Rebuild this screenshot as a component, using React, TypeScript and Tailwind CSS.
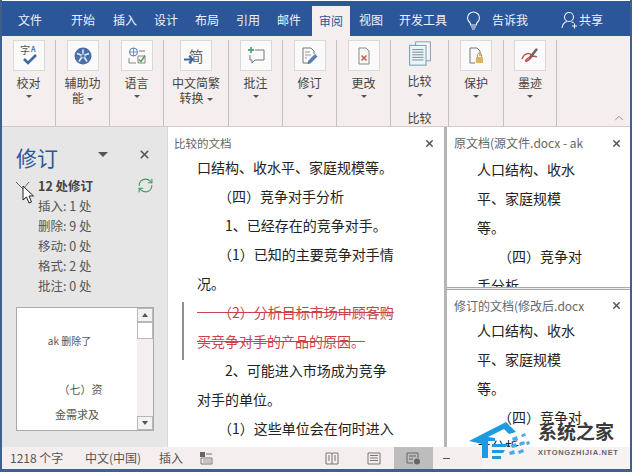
import { ChevronUp, RefreshCw, X } from "lucide-react";

const cjk = { fontFamily: '"Noto Sans CJK SC", "Noto Sans", sans-serif' };

const tabs = [
  { label: "文件", ml: "ml-[16px]" },
  { label: "开始", ml: "ml-[29px]" },
  { label: "插入", ml: "ml-[18px]" },
  { label: "设计", ml: "ml-[17px]" },
  { label: "布局", ml: "ml-[17px]" },
  { label: "引用", ml: "ml-[17px]" },
  { label: "邮件", ml: "ml-[17px]" },
];

function Caret({ className = "" }: { className?: string }) {
  return <span className={`inline-block h-0 w-0 border-x-[3px] border-t-[3px] border-x-transparent border-t-[#555] ${className}`} />;
}

function IconBox({ children }: { children: React.ReactNode }) {
  return <div className="flex h-[31px] w-[32px] items-center justify-center border border-[#dcd8d8] bg-[#fbfafa]">{children}</div>;
}

function RibbonGroup({ w, icon, lines, inlineCaret }: { w: string; icon: React.ReactNode; lines: string[]; inlineCaret?: boolean }) {
  return (
    <div className={`flex h-[86px] flex-col items-center border-r border-[#c6c2c2] ${w}`}>
      <IconBox>{icon}</IconBox>
      <div className="mt-[4px] text-center text-[12px] leading-[15px] text-[#444]">
        {lines.map((line, i) => (
          <div key={line}>
            {line}
            {inlineCaret && i === lines.length - 1 && <Caret className="mb-[2px] ml-[3px]" />}
          </div>
        ))}
      </div>
      {!inlineCaret && <Caret className="mt-[5px]" />}
    </div>
  );
}

type Line = { text: string; indent?: boolean; paren?: boolean; del?: boolean };

function DocLines({ lines, className = "" }: { lines: Line[]; className?: string }) {
  return (
    <div className={className}>
      {lines.map((l) => (
        <p
          key={l.text}
          className={`h-[29px] whitespace-pre text-[14px] leading-[29px] ${l.del ? "text-[#c8434a] line-through" : "text-[#222]"} ${l.indent ? "pl-[28px]" : ""} ${l.paren ? "pl-[21px]" : ""}`}
        >
          {l.text}
        </p>
      ))}
    </div>
  );
}

function PaneTitle({ title, top }: { title: string; top: string }) {
  return (
    <div className={`flex h-[26px] shrink-0 items-center justify-between pl-[7px] pr-[8px] ${top}`}>
      <span className="w-[131px] overflow-hidden whitespace-nowrap text-[12px] leading-[20px] text-[#666]">{title}</span>
      <X size={11} strokeWidth={3.2} className="text-[#555]" />
    </div>
  );
}

const mainDoc: Line[] = [
  { text: "口结构、收水平、家庭规模等。" },
  { text: "（四）竞争对手分析", paren: true },
  { text: "1、已经存在的竞争对手。", indent: true },
  { text: "（1）已知的主要竞争对手情", paren: true },
  { text: "况。" },
  { text: "\u2002\u2002\u2002（2）分析目标市场中顾客购", del: true },
  { text: "买竞争对手的产品的原因。", del: true },
  { text: "2、可能进入市场成为竞争", indent: true },
  { text: "对手的单位。" },
  { text: "（1）这些单位会在何时进入", paren: true },
];

const sideDoc: Line[] = [
  { text: "人口结构、收水" },
  { text: "平、家庭规模" },
  { text: "等。" },
  { text: "（四）竞争对", paren: true },
  { text: "手分析" },
];

const stats = ["插入: 1 处", "删除: 9 处", "移动: 0 处", "格式: 2 处", "批注: 0 处"];

export default function App() {
  return (
    <div className="relative flex h-[472px] w-[632px] flex-col overflow-hidden border-x-[2px] border-b-[3px] border-x-[#3f5f8c] border-b-[#3f5f8c] bg-white pt-px" style={cjk}>
      {/* tabs */}
      <div className="flex h-[35px] shrink-0 items-center bg-[#2b579a] pt-[3px] text-[12px] text-[#eef2f8]">
        {tabs.map((t) => (
          <div key={t.label} className={`w-[24px] whitespace-nowrap ${t.ml}`}>
            {t.label}
          </div>
        ))}
        <div className="ml-[11px] flex h-[30px] w-[38px] items-center justify-center self-end bg-[#f4eeee] text-[#2b579a]">审阅</div>
        <div className="ml-[9px] w-[24px]">视图</div>
        <div className="ml-[16px] w-[48px]">开发工具</div>
        <svg className="ml-[19px]" width="15" height="19" viewBox="0 0 15 19" fill="none" stroke="#eef2f8" strokeWidth="1.1">
          <path d="M4.500 12.500C3 11 1.500 9.500 1.500 7a6 6 0 0 1 12 0c0 2.500-1.500 4-3 5.500v1.500h-6z" />
          <path d="M5 16h5M6 18h3" />
        </svg>
        <div className="ml-[11px] w-[36px]">告诉我</div>
        <svg className="ml-[33px]" width="17" height="18" viewBox="0 0 17 18" fill="none" stroke="#eef2f8" strokeWidth="1.1">
          <circle cx="8" cy="6" r="4.500" />
          <path d="M1 17c.5-3.500 2.500-6 5-6.500M10.500 10.800c.8.300 1.500.7 2 1.200M11 15h5M13.500 12.500v5" />
        </svg>
        <div className="ml-[1px]">共享</div>
      </div>

      {/* ribbon */}
      <div className="relative flex h-[90px] shrink-0 items-start bg-[#f4eeee] pt-[4px]">
        <RibbonGroup
          w="w-[54px]"
          lines={["校对"]}
          icon={
            <svg width="24" height="24" viewBox="0 0 24 24" fill="none">
              <text x="3" y="10" fontSize="10" fill="#555">字</text>
              <text x="14" y="8" fontSize="7" fontWeight="700" fill="#4a6fa8">A</text>
              <path d="M7 15l4 4 8-8" stroke="#3f689f" strokeWidth="2.600" />
            </svg>
          }
        />
        <RibbonGroup
          w="w-[54px]"
          lines={["辅助功", "能"]}
          inlineCaret
          icon={
            <svg width="20" height="20" viewBox="0 0 20 20">
              <circle cx="10" cy="10" r="8.500" fill="#4a6fa8" />
              <circle cx="10" cy="10" r="2" fill="none" stroke="#dfe7f2" strokeWidth="0.8" />
              <path d="M10 3.500v4M4 7.500l4 1.500M16 7.500l-4 1.500M6 15.500l2.500-4M14 15.500l-2.500-4" stroke="#e8eef6" strokeWidth="1.500" />
            </svg>
          }
        />
        <RibbonGroup
          w="w-[54px]"
          lines={["语言"]}
          icon={
            <svg width="20" height="20" viewBox="0 0 20 20" fill="none">
              <circle cx="6.500" cy="6" r="4" stroke="#5a7fb0" />
              <path d="M2.500 6h8M6.500 2v8" stroke="#5a7fb0" strokeWidth="0.8" />
              <path d="M12 5h6" stroke="#777" />
              <path d="M2 12v5h7M11 10h7v7h-7z" stroke="#888" />
              <path d="M12 13.500l2 2 4-6" stroke="#5aa15a" strokeWidth="1.500" />
            </svg>
          }
        />
        <RibbonGroup
          w="w-[65px]"
          lines={["中文简繁", "转换"]}
          inlineCaret
          icon={
            <div className="relative text-[15px] leading-none text-[#666]">
              简
              <svg className="absolute left-[-4px] top-[7px]" width="11" height="9" viewBox="0 0 11 9" fill="none">
                <path d="M0 4.500h8M5 1l4 3.500L5 8" stroke="#3f689f" strokeWidth="1.800" />
              </svg>
            </div>
          }
        />
        <RibbonGroup
          w="w-[54px]"
          lines={["批注"]}
          icon={
            <svg width="20" height="20" viewBox="0 0 20 20" fill="none">
              <path d="M9 4h9v10H9l-3 3v-3H4V9" stroke="#777" />
              <path d="M5 1v6M2 4h6" stroke="#5aa57a" strokeWidth="1.800" />
            </svg>
          }
        />
        <RibbonGroup
          w="w-[54px]"
          lines={["修订"]}
          icon={
            <svg width="20" height="20" viewBox="0 0 20 20" fill="none">
              <path d="M3 2h8l3 3v3M3 2v15h6" stroke="#777" />
              <path d="M5 6h5M5 9h6M5 12h2" stroke="#999" />
              <path d="M8 15l7-7 2.500 2.500-7 7-3 .5z" fill="#5a7fb0" />
            </svg>
          }
        />
        <RibbonGroup
          w="w-[54px]"
          lines={["更改"]}
          icon={
            <svg width="20" height="20" viewBox="0 0 20 20" fill="none">
              <path d="M5 2h7l3 3v13H5z" stroke="#888" />
              <path d="M7.500 9.500l5 5M12.500 9.500l-5 5" stroke="#c0604f" strokeWidth="1.600" />
            </svg>
          }
        />
        <div className="flex h-[86px] w-[58px] flex-col items-center border-r border-[#c6c2c2] text-[12px] text-[#444]">
          <svg width="26" height="29" viewBox="0 0 26 29" fill="none" className="mt-[1px]">
            <rect x="8" y="1" width="17" height="22" fill="#f7f7f7" stroke="#7d8f9c" />
            <rect x="1" y="5" width="19" height="23" fill="#eaf5f8" stroke="#5f8fa8" />
            <path d="M4 10h13M4 13h13M4 16h13M4 19h13M4 22h13" stroke="#6b7d88" />
          </svg>
          <div className="mt-[6px] leading-[17px]">比较</div>
          <Caret className="mt-[5px]" />
          <div className="mt-[12px] leading-[17px]">比较</div>
        </div>
        <RibbonGroup
          w="w-[55px]"
          lines={["保护"]}
          icon={
            <svg width="20" height="20" viewBox="0 0 20 20" fill="none">
              <path d="M4 2h7l3 3v5M4 2v15h5" stroke="#777" />
              <rect x="10" y="11" width="7" height="6" fill="#dcb45a" />
              <path d="M11.500 11V9a2 2 0 0 1 4 0v2" stroke="#c9a04a" />
            </svg>
          }
        />
        <RibbonGroup
          w="w-[53px]"
          lines={["墨迹"]}
          icon={
            <svg width="22" height="20" viewBox="0 0 22 20" fill="none">
              <path d="M3 13c2-6 9-7 9-3s-7 7-5 4 8-5 11-3" stroke="#c2554e" strokeWidth="1.500" />
              <path d="M10 11l7-9 2 1.500-7 9z" fill="#666" />
            </svg>
          }
        />
        <ChevronUp size={14} strokeWidth={1} className="absolute bottom-[1px] right-[4px] text-[#555]" />
      </div>

      {/* body */}
      <div className="flex min-h-0 flex-1 border-t border-[#d0cccc]">
        {/* revisions panel */}
        <aside className="flex w-[165px] shrink-0 flex-col bg-[#e6e6e6] pl-[14px]">
          <div className="flex h-[46px] shrink-0 items-center pt-[14px]">
            <span className="shrink-0 whitespace-nowrap text-[21px] leading-none text-[#2b579a]">修订</span>
            <Caret className="mb-[6px] ml-[40px] shrink-0 border-x-[5px] border-t-[5px]" />
            <X size={13} strokeWidth={3} className="mb-[6px] ml-[30px] shrink-0 text-[#555]" />
          </div>
          <div className="relative mt-[3px] flex items-start pl-[22px]">
            <svg className="absolute left-[-1px] top-[5px]" width="24" height="32" viewBox="0 0 24 32" fill="none">
              <path d="M1 1l7 7 6-7" stroke="#666" />
              <path d="M8 5v14l3.500-3 2.500 6 2.500-1-2.500-6h4.500z" fill="#fff" stroke="#222" />
            </svg>
            <div className="flex-1 text-[12.500px] leading-[20px] text-[#555]">
              <div className="font-bold text-[#444]">12 处修订</div>
              {stats.map((s) => (
                <div key={s}>{s}</div>
              ))}
            </div>
            <RefreshCw size={17} strokeWidth={1.500} className="mr-[13px] mt-[1px] text-[#3f9a5f]" />
          </div>
          <div className="mt-[11px] flex h-[124px] w-[138px] border border-[#a9a9a9] bg-white">
            <div className="flex-1 pt-[25px] text-center text-[11px] text-[#555]">
              <div className="pr-[15px] text-[10px] leading-[16px]">ak 删除了</div>
              <div className="mt-[27px] pl-[7px] leading-[26px]">（七）资</div>
              <div className="leading-[24px]">金需求及</div>
            </div>
            <div className="flex w-[16px] flex-col bg-[#f4eeee]">
              <div className="flex h-[14px] items-center justify-center border border-[#b8b8b8] bg-[#f2f2f2]">
                <span className="h-0 w-0 border-x-[3.500px] border-b-[4px] border-x-transparent border-b-[#555]" />
              </div>
              <div className="h-[17px] border border-[#b8b8b8] bg-white" />
              <div className="flex-1" />
              <div className="flex h-[14px] items-center justify-center border border-[#b8b8b8] bg-[#f2f2f2]">
                <Caret className="border-x-[3.500px] border-t-[4px]" />
              </div>
            </div>
          </div>
        </aside>

        {/* compared document */}
        <section className="flex w-[277px] shrink-0 flex-col overflow-hidden border-l border-[#d8d8d8] bg-white">
          <div className="flex h-[26px] shrink-0 items-center justify-between pl-[6px] pr-[9px] pt-[6px]">
            <span className="text-[11.500px] leading-[20px] text-[#666]">比较的文档</span>
            <X size={11} strokeWidth={3.200} className="text-[#555]" />
          </div>
          <div className="relative pl-[29px]">
            <span className="absolute left-[14px] top-[149px] h-[58px] w-[2px] bg-[#909090]" />
            <DocLines lines={mainDoc} />
          </div>
        </section>

        {/* source documents */}
        <section className="flex min-w-0 flex-1 flex-col border-l-[3px] border-l-[#b4b4b4]">
          <div className="flex h-[160px] shrink-0 flex-col overflow-hidden">
            <PaneTitle title="原文档(源文件.docx - ak" top="pt-[6px]" />
            <DocLines className="mt-[2px] pl-[30px]" lines={sideDoc} />
          </div>
          <div className="h-[3px] shrink-0 border-y border-[#a8a8a8] bg-[#f0f0f0]" />
          <div className="flex min-h-0 flex-1 flex-col overflow-hidden">
            <PaneTitle title="修订的文档(修改后.docx" top="pt-[5px]" />
            <DocLines className="pl-[30px]" lines={sideDoc} />
          </div>
        </section>
      </div>

      {/* status bar */}
      <div className="flex h-[22px] shrink-0 items-center bg-[#f4eeee] pl-[8px] text-[12px] text-[#555]">
        <span className="w-[75px] whitespace-nowrap">1218 个字</span>
        <span className="w-[74px] whitespace-nowrap">中文(中国)</span>
        <span className="w-[41px]">插入</span>
        <svg width="13" height="13" viewBox="0 0 13 13">
          <rect x="0" y="0" width="5" height="5" fill="#666" />
          <path d="M1 6h11v6H1zM6 2h6" fill="none" stroke="#777" />
          <path d="M3 8h8M3 10h8" stroke="#999" />
        </svg>
        <svg className="ml-[112px]" width="14" height="13" viewBox="0 0 14 13" fill="none">
          <path d="M1 1h5.500l.5 1 .5-1H13v11H1zM7 2v10M3 4h2M3 6h2M3 8h2M9 4h2M9 6h2M9 8h2" stroke="#777" />
        </svg>
        <svg className="ml-[28px]" width="14" height="13" viewBox="0 0 14 13" fill="none">
          <path d="M1 1h12v11H1zM3 3.500h8M3 6h8M3 8.500h8" stroke="#777" />
        </svg>
        <div className="ml-[13px] flex h-[22px] w-[39px] items-center justify-center bg-[#bdbdbd]">
          <svg width="15" height="13" viewBox="0 0 15 13" fill="none">
            <path d="M1 1h11v5M1 1v10h6M3 4h7M3 7h4" stroke="#666" />
            <circle cx="11" cy="9.500" r="3" fill="#666" />
          </svg>
        </div>
        <span className="ml-[10px] h-px w-[7px] bg-[#555]" />
      </div>

      {/* watermark */}
      <div className="absolute bottom-[-3px] right-[-2px] h-[54px] w-[164px]">
        <div className="absolute bottom-0 right-0 h-[25px] w-[150px] bg-[#f7f3f3]/90" />
        <div className="relative flex items-start">
          <svg className="mt-[2px] shrink-0" width="62" height="44" viewBox="0 0 62 44">
            <path d="M1 21L38 2l10 10-7 2-5-5-16 8 7 1v3H20v17h-6V24z" fill="#1e9ae0" />
            <path d="M24 24h16l-2 3H24zM24 30h13l-2 3H24zM24 36h9v3h-9z" fill="#1e9ae0" />
            <path d="M44 18l5-2 1 4-5 1zM51 23l5-2 1 3-5 2zM43 25l5-2 1 4-5 1zM53 15l4-2 1 3-4 1zM50 31l5-2 1 3-5 2zM41 32l5-2 1 4-5 1zM58 22l3-1 1 3-3 1z" fill="#4aa9e6" />
          </svg>
          <div className="ml-[8px] flex flex-col">
            <span className="mt-[1px] whitespace-nowrap text-[19px] font-bold leading-[24px] text-[#3a3a3a]">系统之家</span>
            <span className="mt-[5px] whitespace-nowrap text-[7.500px] font-bold leading-[10px] tracking-[0.7px] text-[#666]" style={{ fontFamily: '"Liberation Sans", sans-serif' }}>
              XITONGZHIJIA.NET
            </span>
          </div>
        </div>
      </div>
    </div>
  );
}
